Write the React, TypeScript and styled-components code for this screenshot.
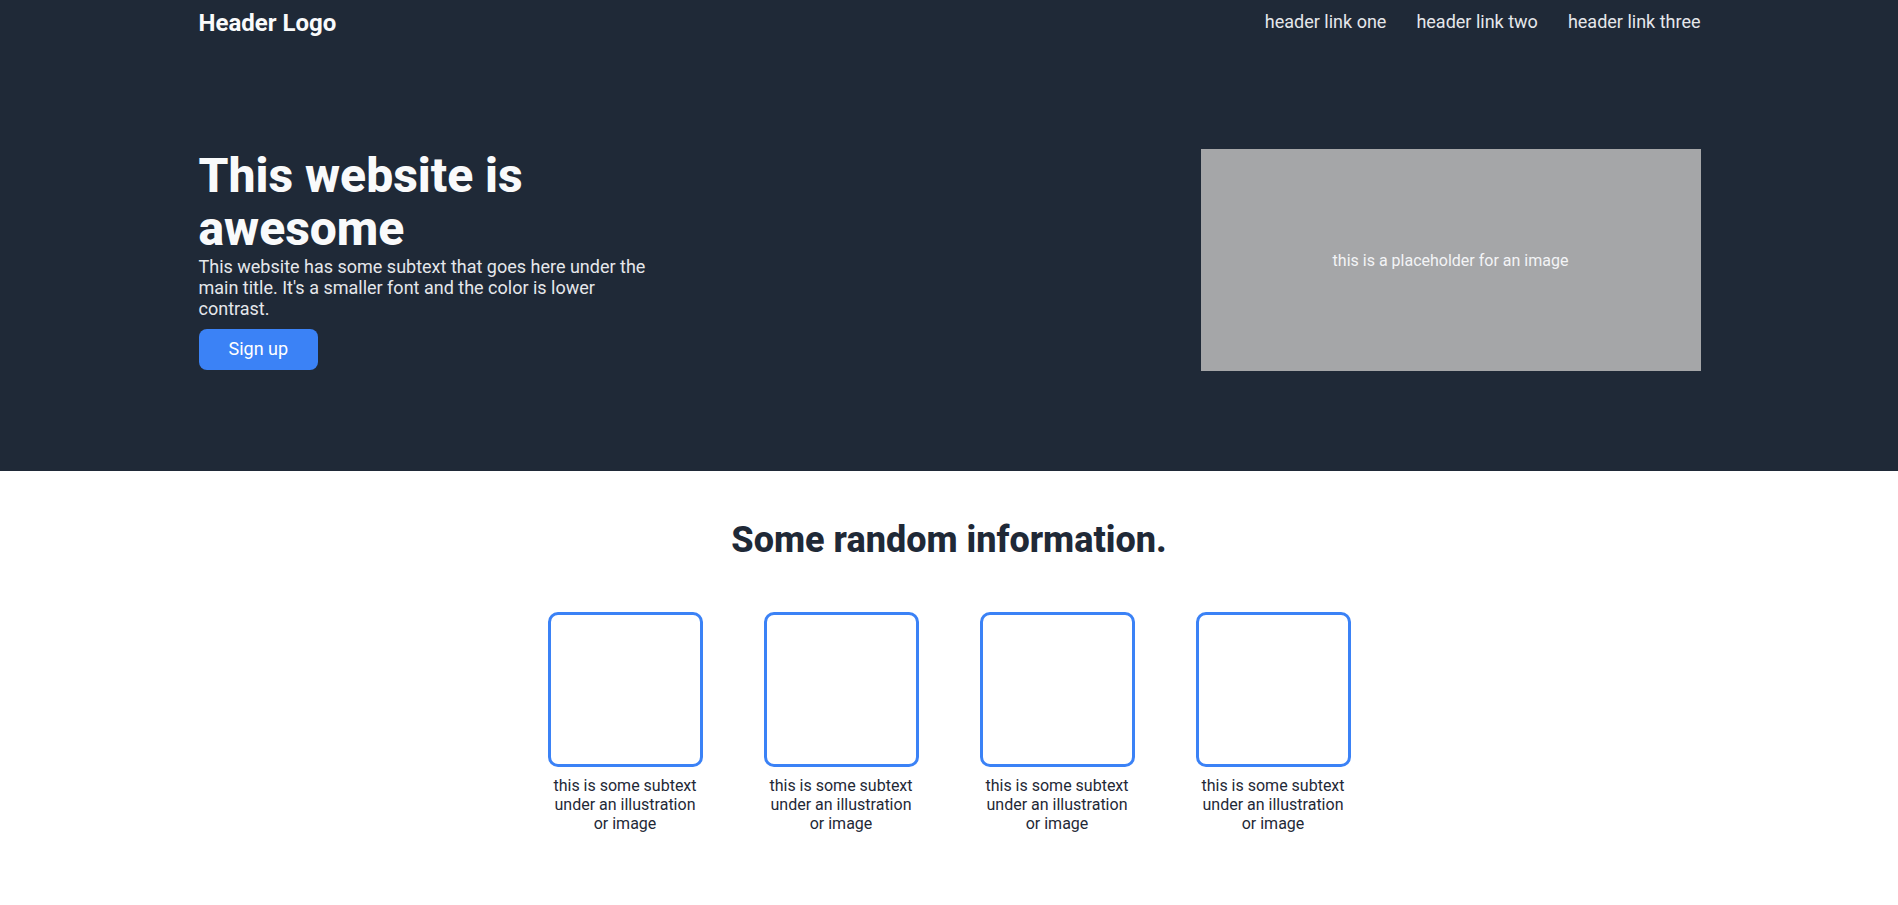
import React from "react";
import styled, { createGlobalStyle } from "styled-components";

const GlobalStyle = createGlobalStyle`
  html, body {
    margin: 0;
    padding: 0;
    background: #ffffff;
    font-family: Roboto, "Liberation Sans", Arial, sans-serif;
  }
  * { box-sizing: border-box; }
`;

const Hero = styled.div`
  background: #1f2937;
  padding-bottom: 100px;
`;

const Container = styled.div`
  width: 1503px;
  margin: 0 auto;
  padding-left: 1px;
`;

const Header = styled.header`
  display: flex;
  align-items: center;
  justify-content: space-between;
  height: 45px;
`;

const Logo = styled.div`
  color: #f9fafb;
  font-size: 24px;
  font-weight: 700;
`;

const NavLinks = styled.nav`
  display: flex;
  gap: 30px;
  margin-bottom: 3px;
`;

const NavLink = styled.a`
  color: #e5e7eb;
  font-size: 18px;
  text-decoration: none;
`;

const HeroRow = styled.section`
  display: flex;
  align-items: center;
  justify-content: space-between;
  padding-top: 104px;
`;

const HeroText = styled.div`
  width: 460px;
  display: flex;
  flex-direction: column;
  align-items: flex-start;
`;

const Title = styled.h1`
  margin: 0;
  color: #f9fafb;
  font-size: 48px;
  font-weight: 800;
  line-height: 1.1;
`;

const Subtext = styled.p`
  margin: 0 0 10px;
  color: #e5e7eb;
  font-size: 18px;
`;

const Button = styled.button`
  background: #3b82f6;
  color: #ffffff;
  border: none;
  border-radius: 8px;
  padding: 10px 30px 11px;
  font-family: inherit;
  font-size: 18px;
  line-height: 20px;
  cursor: pointer;
`;

const Placeholder = styled.div`
  width: 500px;
  height: 222px;
  background: #a5a6a8;
  color: #f3f4f6;
  font-size: 16px;
  display: flex;
  align-items: center;
  justify-content: center;
`;

const InfoSection = styled.section`
  padding-top: 48px;
  padding-bottom: 40px;
  display: flex;
  flex-direction: column;
  align-items: center;
`;

const SectionTitle = styled.h2`
  margin: 0 0 51px;
  color: #1f2937;
  font-size: 36px;
  font-weight: 800;
`;

const Cards = styled.div`
  display: flex;
  gap: 61px;
`;

const Card = styled.div`
  width: 155px;
  display: flex;
  flex-direction: column;
  align-items: center;
`;

const Illustration = styled.div`
  width: 155px;
  height: 155px;
  border: 3px solid #3b82f6;
  border-radius: 10px;
`;

const CardText = styled.p`
  margin: 9px 0 0;
  color: #1f2937;
  font-size: 16px;
  text-align: center;
`;

const links = ["header link one", "header link two", "header link three"];

export default function App() {
  return (
    <>
      <GlobalStyle />
      <Hero>
        <Container>
          <Header>
            <Logo>Header Logo</Logo>
            <NavLinks>
              {links.map((l) => (
                <NavLink key={l} href="#">
                  {l}
                </NavLink>
              ))}
            </NavLinks>
          </Header>
          <HeroRow>
            <HeroText>
              <Title>This website is awesome</Title>
              <Subtext>
                This website has some subtext that goes here under the main
                title. It's a smaller font and the color is lower contrast.
              </Subtext>
              <Button>Sign up</Button>
            </HeroText>
            <Placeholder>this is a placeholder for an image</Placeholder>
          </HeroRow>
        </Container>
      </Hero>
      <InfoSection>
        <SectionTitle>Some random information.</SectionTitle>
        <Cards>
          {[0, 1, 2, 3].map((i) => (
            <Card key={i}>
              <Illustration />
              <CardText>this is some subtext under an illustration or image</CardText>
            </Card>
          ))}
        </Cards>
      </InfoSection>
    </>
  );
}
